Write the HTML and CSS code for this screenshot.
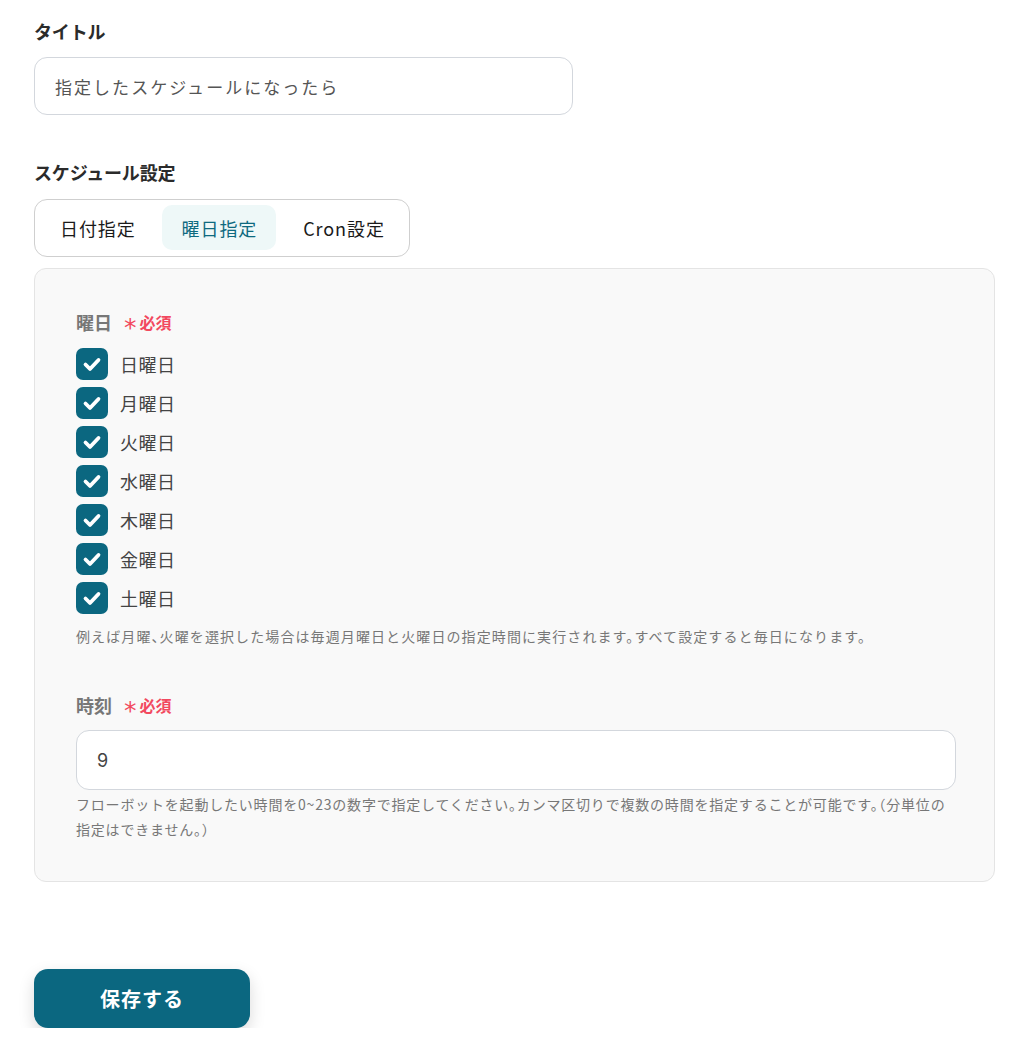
FILE: index.html
```html
<!DOCTYPE html>
<html lang="ja">
<head>
<meta charset="utf-8">
<title>スケジュール設定</title>
<link rel="stylesheet" href="styles.css">
</head>
<body>
<div class="page">
  <div class="field">
    <div class="label">タイトル</div>
    <div class="input title-input">指定したスケジュールになったら</div>
  </div>

  <div class="field schedule">
    <div class="label">スケジュール設定</div>
    <div class="tabs">
      <div class="tab">日付指定</div>
      <div class="tab active">曜日指定</div>
      <div class="tab">Cron設定</div>
    </div>
    <div class="panel">
      <div class="sub-label">曜日 <span class="req"><span class="ast">*</span>必須</span></div>
      <div class="checks">
        <label class="check"><span class="box"><svg viewBox="0 0 32 32" width="32" height="32"><path d="M9.5 16.5l4.5 4.5 8.5-9" fill="none" stroke="#fff" stroke-width="3.8" stroke-linecap="round" stroke-linejoin="round"/></svg></span>日曜日</label>
        <label class="check"><span class="box"><svg viewBox="0 0 32 32" width="32" height="32"><path d="M9.5 16.5l4.5 4.5 8.5-9" fill="none" stroke="#fff" stroke-width="3.8" stroke-linecap="round" stroke-linejoin="round"/></svg></span>月曜日</label>
        <label class="check"><span class="box"><svg viewBox="0 0 32 32" width="32" height="32"><path d="M9.5 16.5l4.5 4.5 8.5-9" fill="none" stroke="#fff" stroke-width="3.8" stroke-linecap="round" stroke-linejoin="round"/></svg></span>火曜日</label>
        <label class="check"><span class="box"><svg viewBox="0 0 32 32" width="32" height="32"><path d="M9.5 16.5l4.5 4.5 8.5-9" fill="none" stroke="#fff" stroke-width="3.8" stroke-linecap="round" stroke-linejoin="round"/></svg></span>水曜日</label>
        <label class="check"><span class="box"><svg viewBox="0 0 32 32" width="32" height="32"><path d="M9.5 16.5l4.5 4.5 8.5-9" fill="none" stroke="#fff" stroke-width="3.8" stroke-linecap="round" stroke-linejoin="round"/></svg></span>木曜日</label>
        <label class="check"><span class="box"><svg viewBox="0 0 32 32" width="32" height="32"><path d="M9.5 16.5l4.5 4.5 8.5-9" fill="none" stroke="#fff" stroke-width="3.8" stroke-linecap="round" stroke-linejoin="round"/></svg></span>金曜日</label>
        <label class="check"><span class="box"><svg viewBox="0 0 32 32" width="32" height="32"><path d="M9.5 16.5l4.5 4.5 8.5-9" fill="none" stroke="#fff" stroke-width="3.8" stroke-linecap="round" stroke-linejoin="round"/></svg></span>土曜日</label>
      </div>
      <p class="help">例えば月曜、火曜を選択した場合は毎週月曜日と火曜日の指定時間に実行されます。すべて設定すると毎日になります。</p>

      <div class="sub-label time-label">時刻 <span class="req"><span class="ast">*</span>必須</span></div>
      <div class="input time-input">9</div>
      <p class="help help2">フローボットを起動したい時間を0~23の数字で指定してください。カンマ区切りで複数の時間を指定することが可能です。（分単位の指定はできません。）</p>
    </div>
  </div>

  <button class="save">保存する</button>
</div>
</body>
</html>
```

FILE: styles.css
```css
* { box-sizing: border-box; }
body {
  margin: 0;
  background: #fff;
  font-family: "Noto Sans CJK JP", "Noto Sans", sans-serif;
  color: #333;
}
.page {
  padding: 19px 28px 0 34px;
  width: 1023px;
}
.label {
  font-size: 18px;
  font-weight: 700;
  line-height: 24px;
  letter-spacing: -0.01em;
  color: #2b2b2b;
}
.input {
  border: 1px solid #d3d7dd;
  border-radius: 13px;
  background: #fff;
  display: flex;
  align-items: center;
  font-size: 17px;
  letter-spacing: 0.12em;
  color: #555;
}
.title-input {
  margin-top: 14px;
  width: 539px;
  height: 58px;
  padding-left: 20px;
}
.schedule { margin-top: 45px; }
.tabs {
  margin-top: 15px;
  display: inline-flex;
  border: 1px solid #cfcfcf;
  border-radius: 13px;
  padding: 5px 5px 6px;
  gap: 7px;
}
.tab {
  height: 45px;
  padding: 0 19px 0 20px;
  display: flex;
  align-items: center;
  font-size: 18px;
  letter-spacing: 0.05em;
  color: #1a1a1a;
  border-radius: 10px;
}
.tab.active {
  background: #eef8f8;
  color: #0e6a80;
}
.panel {
  margin-top: 11px;
  background: #f9f9f9;
  border: 1px solid #e4e4e4;
  border-radius: 12px;
  padding: 41px 38px 39px 41px;
}
.sub-label {
  font-size: 18px;
  font-weight: 700;
  line-height: 24px;
  height: 24px;
  color: #777;
  display: flex;
  align-items: center;
  gap: 12px;
}
.req {
  color: #f2495f;
  font-size: 16px;
  font-weight: 700;
  line-height: 24px;
  height: 24px;
  display: inline-flex;
  align-items: center;
}
.ast {
  font-family: "DejaVu Sans", sans-serif;
  font-size: 25px;
  font-weight: 400;
  line-height: 16px;
  height: 16px;
  display: inline-block;
  margin-right: 3px;
  position: relative;
  top: 6px;
}
.checks {
  margin-top: 14px;
  display: flex;
  flex-direction: column;
  gap: 7px;
}
.check {
  display: flex;
  align-items: center;
  gap: 12px;
  font-size: 18px;
  letter-spacing: 0.03em;
  color: #444;
  height: 32px;
}
.box {
  width: 32px;
  height: 32px;
  border-radius: 7px;
  background: #0b6780;
  display: block;
  flex: none;
}
.box svg { display: block; }
.help {
  margin: 10px 0 0;
  font-size: 14px;
  line-height: 25px;
  letter-spacing: 1.1px;
  color: #777;
  font-feature-settings: "halt";
}
.time-label { margin-top: 44px; }
.time-input {
  margin-top: 13px;
  height: 60px;
  padding-left: 20px;
  font-family: Inter, "Noto Sans CJK JP", sans-serif;
  font-size: 18px;
  color: #444;
}
.help2 { margin-top: 2px; letter-spacing: 0.8px; }
.save {
  margin-top: 87px;
  width: 216px;
  height: 59px;
  border: none;
  border-radius: 14px;
  background: #0b6780;
  color: #fff;
  font-family: "Noto Sans CJK JP", sans-serif;
  font-size: 20px;
  font-weight: 700;
  letter-spacing: 0.05em;
  box-shadow: 0 6px 16px rgba(0, 0, 0, 0.15);
}
```
